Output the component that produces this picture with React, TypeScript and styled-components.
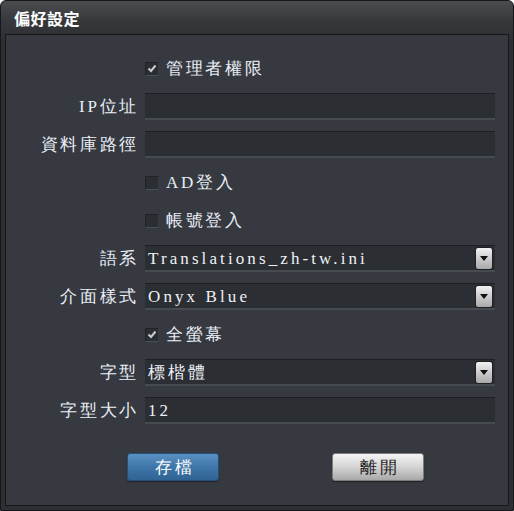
import React from "react";
import styled, { createGlobalStyle } from "styled-components";

const Global = createGlobalStyle`
  html, body { margin: 0; padding: 0; background: #ffffff; }
  body { width: 514px; height: 511px; overflow: hidden; }
  * { box-sizing: border-box; }
`;

const FONT = `"Liberation Serif", "Times New Roman", serif`;

const Window = styled.div`
  width: 514px;
  height: 511px;
  border: 1px solid #16171a;
  border-radius: 6px 6px 0 0;
  background: linear-gradient(#4a4c50 0px, #36383c 20px, #2c2e32 40px, #2c2e32 100%);
  display: flex;
  flex-direction: column;
  overflow: hidden;
`;

const TitleBar = styled.div`
  height: 33px;
  display: flex;
  align-items: center;
  padding-left: 13px;
  color: #ffffff;
  font-family: "Noto Sans CJK TC", sans-serif;
  font-weight: 700;
  font-size: 16px;
  letter-spacing: 0.5px;
`;

const Panel = styled.div`
  margin: 0 4px;
  height: 472px;
  border: 1px solid #15171a;
  background: #363940;
  display: flex;
  flex-direction: column;
  padding-top: 20px;
`;

const Form = styled.div`
  display: grid;
  grid-template-columns: 133px 350px;
  column-gap: 6px;
  row-gap: 11px;
  grid-auto-rows: 27px;
`;

const Label = styled.div`
  display: flex;
  align-items: center;
  justify-content: flex-end;
  color: #e9eef6;
  font-family: ${FONT};
  font-size: 17px;
  letter-spacing: 2.7px;
  white-space: nowrap;
`;

const Field = styled.div`
  height: 27px;
  background: #2b2e33;
  border-top: 1px solid #1d1f23;
  border-bottom: 2px solid #464a51;
  display: flex;
  align-items: center;
  padding-left: 3px;
  padding-right: 2px;
  color: #eef2f8;
  font-family: ${FONT};
  font-size: 17px;
  letter-spacing: 3.1px;
  white-space: nowrap;
`;

const FieldText = styled.span`
  flex: 1;
  padding-top: 1px;
`;

const DropButton = styled.div`
  width: 18px;
  height: 23px;
  border-radius: 3px;
  background: linear-gradient(#f2f2f2, #c9c9c9 55%, #a9a9a9);
  border: 1px solid #1e2024;
  display: flex;
  align-items: center;
  justify-content: center;
`;

const CheckRow = styled.label`
  display: flex;
  align-items: center;
  gap: 7px;
  color: #e9eef6;
  font-family: ${FONT};
  font-size: 17px;
  letter-spacing: 2.7px;
  white-space: nowrap;
`;

const Box = styled.span`
  width: 14px;
  height: 14px;
  background: #2a2d32;
  border-top: 1px solid #202226;
  border-left: 1px solid #202226;
  border-bottom: 1px solid #4a4e55;
  border-right: 1px solid #3a3d43;
  display: flex;
  align-items: center;
  justify-content: center;
`;

const Buttons = styled.div`
  display: flex;
  padding-left: 121px;
  gap: 113px;
  margin-top: 29px;
`;

const Button = styled.div<{ $primary?: boolean }>`
  width: 92px;
  height: 28px;
  border-radius: 3px;
  display: flex;
  align-items: center;
  justify-content: center;
  font-family: ${FONT};
  font-size: 17px;
  letter-spacing: 3px;
  padding-left: 3px;
  color: ${(p) => (p.$primary ? "#ffffff" : "#1c1c1c")};
  background: ${(p) =>
    p.$primary
      ? "linear-gradient(#5b90c2, #3f76a8 50%, #2f6394)"
      : "linear-gradient(#f4f4f4, #d4d4d4 50%, #a8a8a8)"};
  border: 1px solid ${(p) => (p.$primary ? "#26507a" : "#7c7c7c")};
  box-shadow: 0 1px 1px rgba(0, 0, 0, 0.4);
`;

const Check = ({ checked }: { checked: boolean }) => (
  <Box>
    {checked && (
      <svg width="10" height="9" viewBox="0 0 10 9">
        <polyline
          points="1.5,4.5 4,7 8.5,1.5"
          fill="none"
          stroke="#c9ccd1"
          strokeWidth="2"
        />
      </svg>
    )}
  </Box>
);

const Arrow = () => (
  <svg width="8" height="5" viewBox="0 0 8 5">
    <polygon points="0,0 8,0 4,5" fill="#111" />
  </svg>
);

const Empty = styled.div``;

const CheckItem = ({ text, checked }: { text: string; checked: boolean }) => (
  <>
    <Empty />
    <CheckRow>
      <Check checked={checked} />
      {text}
    </CheckRow>
  </>
);

const TextItem = ({ label, value }: { label: string; value?: string }) => (
  <>
    <Label>{label}</Label>
    <Field>
      <FieldText>{value}</FieldText>
    </Field>
  </>
);

const SelectItem = ({ label, value }: { label: string; value: string }) => (
  <>
    <Label>{label}</Label>
    <Field>
      <FieldText>{value}</FieldText>
      <DropButton>
        <Arrow />
      </DropButton>
    </Field>
  </>
);

export default function App() {
  return (
    <>
      <Global />
      <Window>
        <TitleBar>偏好設定</TitleBar>
        <Panel>
          <Form>
            <CheckItem text="管理者權限" checked />
            <TextItem label="IP位址" />
            <TextItem label="資料庫路徑" />
            <CheckItem text="AD登入" checked={false} />
            <CheckItem text="帳號登入" checked={false} />
            <SelectItem label="語系" value="Translations_zh-tw.ini" />
            <SelectItem label="介面樣式" value="Onyx Blue" />
            <CheckItem text="全螢幕" checked />
            <SelectItem label="字型" value="標楷體" />
            <TextItem label="字型大小" value="12" />
          </Form>
          <Buttons>
            <Button $primary>存檔</Button>
            <Button>離開</Button>
          </Buttons>
        </Panel>
      </Window>
    </>
  );
}
